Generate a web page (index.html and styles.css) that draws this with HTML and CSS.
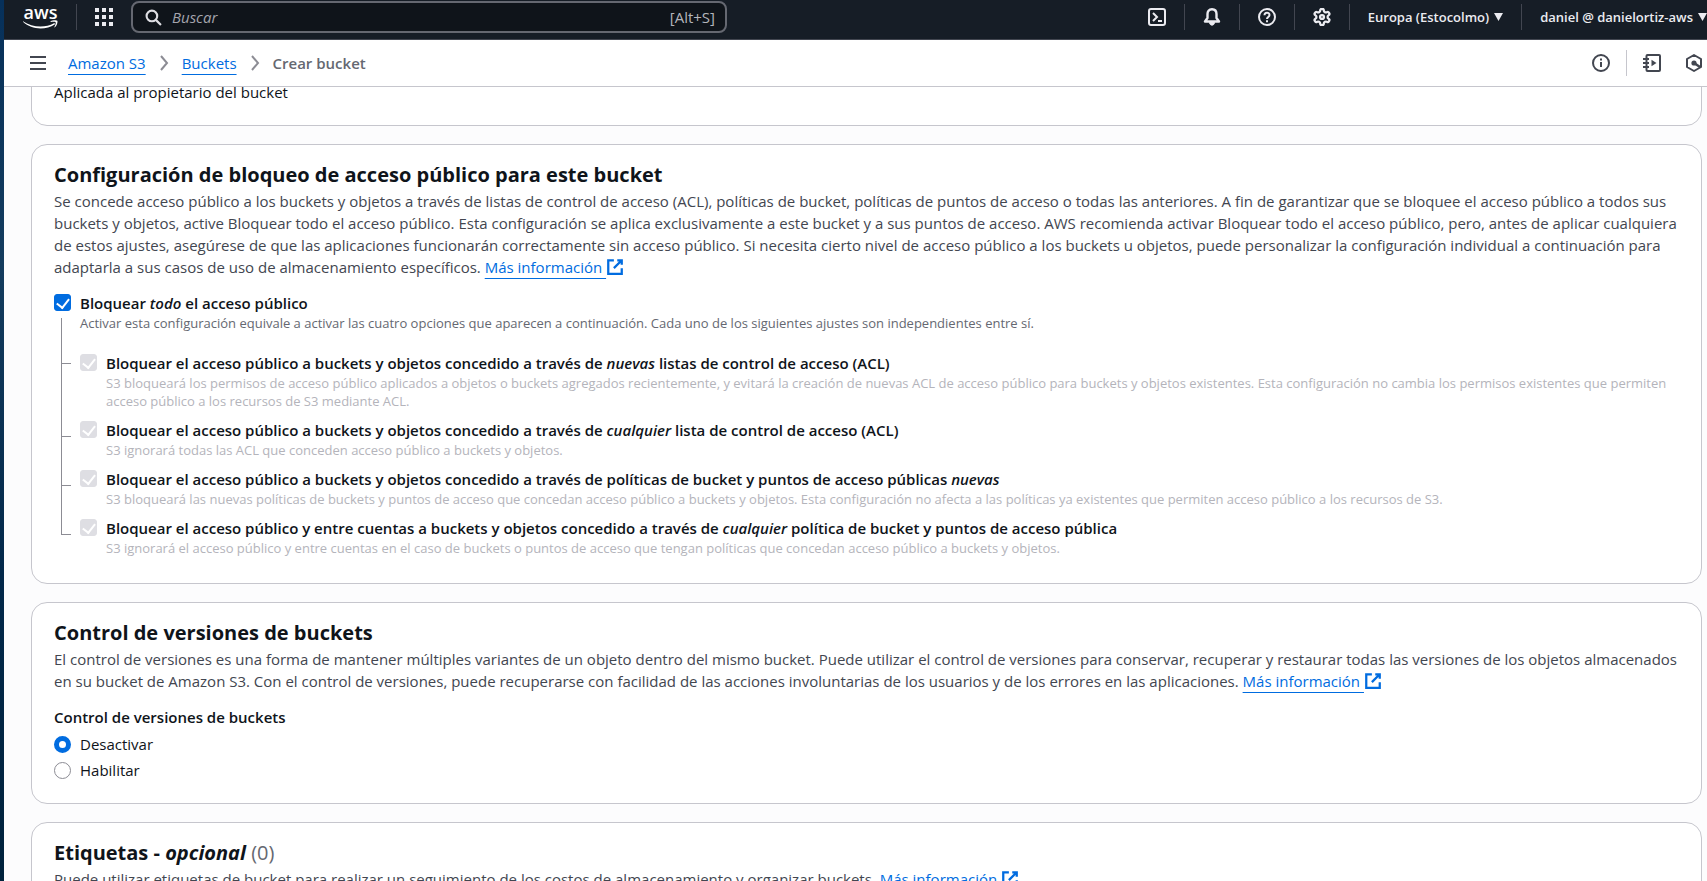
FILE: index.html
```
<!DOCTYPE html>
<html lang="es">
<head>
<meta charset="utf-8">
<title>Crear bucket | S3</title>
<link rel="stylesheet" href="styles.css">
</head>
<body>
<svg width="0" height="0" class="defs" aria-hidden="true">
  <symbol id="external" viewBox="0 0 16 16"><path d="M10 2h4v4M7 9l7-7M14 9v5H2V2h5" fill="none" stroke="currentColor" stroke-width="2"/></symbol>
  <symbol id="chevron" viewBox="0 0 16 16"><path d="M5 1l6 7-6 7" fill="none" stroke="currentColor" stroke-width="2"/></symbol>
</svg>
<header class="topnav">
  <a class="logo" href="#" aria-label="aws"><span class="logo-word">aws</span><svg class="logo-smile" viewBox="0 0 35 9"><path d="M0 1.2C9 7.5 22 8.2 31 3.3c.8-.4 1.5.5.7 1.1C22.500 10.500 8 9.500.2 2 -.2 1.600-.2 1.100 0 1.200z"/><path d="M27.500 1.400c2.500-1.500 6.200-1.200 6.800-.6.6.7-.1 4.600-2.400 6.500-.4.300-.7.100-.5-.3.600-1.300 1.700-4.100 1.200-4.800-.6-.700-3.400-.4-4.700-.2-.5 0-.7-.3-.4-.6z"/></svg></a>
  <span class="rule"></span>
  <button class="icon-btn" aria-label="Servicios"><svg viewBox="0 0 18 18"><path d="M0 0h4v4H0zM7 0h4v4H7zM14 0h4v4h-4zM0 7h4v4H0zM7 7h4v4H7zM14 7h4v4h-4zM0 14h4v4H0zM7 14h4v4H7zM14 14h4v4h-4z" fill="currentColor"/></svg></button>
  <label class="search">
    <svg viewBox="0 0 16 16"><circle cx="6.500" cy="6.500" r="5" fill="none" stroke="currentColor" stroke-width="2"/><path d="M10 10l5 5" stroke="currentColor" stroke-width="2"/></svg>
    <input type="text" placeholder="Buscar" aria-label="Buscar">
    <span class="hint">[Alt+S]</span>
  </label>
  <div class="tools">
    <button class="icon-btn" aria-label="CloudShell"><svg viewBox="0 0 18 18" fill="none" stroke="currentColor" stroke-width="2"><rect x="1" y="1" width="16" height="16" rx="2"/><path d="M5 5l4 4-4 4M10 13h4"/></svg></button>
    <span class="rule"></span>
    <button class="icon-btn" aria-label="Notificaciones"><svg viewBox="0 0 18 18" fill="none" stroke="currentColor" stroke-width="2.400" stroke-linejoin="round"><path d="M9 1.200C5.800 1.200 4.500 3.500 4.500 6v4L2 13.500h14L13.500 10V6C13.500 3.500 12.200 1.200 9 1.200z"/><path d="M6.500 14.500c0 3.500 5 3.500 5 0z" fill="currentColor" stroke-width="1"/></svg></button>
    <span class="rule"></span>
    <button class="icon-btn" aria-label="Ayuda"><svg viewBox="0 0 18 18" fill="none" stroke="currentColor" stroke-width="2"><circle cx="9" cy="9" r="8"/><path d="M6.500 7.200C6.500 4 11.500 4 11.500 7c0 2-2.500 2-2.500 4M9 12.200v2"/></svg></button>
    <span class="rule"></span>
    <button class="icon-btn" aria-label="Configuración"><svg viewBox="1 1 22 22" fill="none" stroke="currentColor" stroke-width="2.800"><circle cx="12" cy="12" r="2.400"/><path d="M12.220 2h-.44a2 2 0 0 0-2 2v.18a2 2 0 0 1-1 1.730l-.43.25a2 2 0 0 1-2 0l-.15-.08a2 2 0 0 0-2.730.73l-.22.38a2 2 0 0 0 .73 2.730l.15.1a2 2 0 0 1 1 1.720v.51a2 2 0 0 1-1 1.740l-.15.09a2 2 0 0 0-.73 2.730l.22.38a2 2 0 0 0 2.730.73l.15-.08a2 2 0 0 1 2 0l.43.25a2 2 0 0 1 1 1.730V20a2 2 0 0 0 2 2h.44a2 2 0 0 0 2-2v-.18a2 2 0 0 1 1-1.730l.43-.25a2 2 0 0 1 2 0l.15.08a2 2 0 0 0 2.730-.73l.22-.39a2 2 0 0 0-.73-2.730l-.15-.08a2 2 0 0 1-1-1.740v-.5a2 2 0 0 1 1-1.740l.15-.09a2 2 0 0 0 .73-2.730l-.22-.38a2 2 0 0 0-2.730-.73l-.15.08a2 2 0 0 1-2 0l-.43-.25a2 2 0 0 1-1-1.730V4a2 2 0 0 0-2-2z"/></svg></button>
    <span class="rule"></span>
    <button class="menu-btn">Europa (Estocolmo)<svg viewBox="0 0 9 8"><path d="M0 0h9L4.500 8z" fill="currentColor"/></svg></button>
    <span class="rule"></span>
    <button class="menu-btn">daniel @ danielortiz-aws<svg viewBox="0 0 9 8"><path d="M0 0h9L4.500 8z" fill="currentColor"/></svg></button>
  </div>
</header>
<div class="toolbar">
  <button class="icon-btn" aria-label="Menú"><svg viewBox="0 0 18 18"><path d="M1 3h16M1 9h16M1 15h16" stroke="currentColor" stroke-width="2"/></svg></button>
  <nav class="crumbs">
    <a class="link" href="#">Amazon S3</a>
    <svg class="chev"><use href="#chevron"/></svg>
    <a class="link" href="#">Buckets</a>
    <svg class="chev"><use href="#chevron"/></svg>
    <span class="current">Crear bucket</span>
  </nav>
  <button class="icon-btn" aria-label="Información"><svg viewBox="0 0 18 18" fill="none" stroke="currentColor" stroke-width="2"><circle cx="9" cy="9" r="8"/><path d="M9 8v5M9 4.500v2"/></svg></button>
  <span class="rule"></span>
  <button class="icon-btn" aria-label="Tutoriales"><svg viewBox="0 0 18 18" fill="none" stroke="currentColor" stroke-width="2"><rect x="3.500" y="1" width="13.500" height="16" rx="1"/><path d="M0 5h6M0 9h6M0 13h6"/><path d="M8.500 5.800v6.400l5-3.200z" fill="currentColor" stroke="none"/></svg></button>
  <button class="icon-btn last" aria-label="Amazon Q"><svg viewBox="0 0 18 18" fill="none" stroke="currentColor" stroke-width="2"><path d="M9 1l7 4v8l-7 4-7-4V5z" stroke-linejoin="round"/><circle cx="9" cy="9" r="2.600" fill="currentColor" stroke="none"/><path d="M9 9l6 4" stroke-width="2.400"/></svg></button>
</div>
<main class="content">
  <section class="card clipped"><p class="value">Aplicada al propietario del bucket</p></section>

  <section class="card">
    <h2>Configuración de bloqueo de acceso público para este bucket</h2>
    <p class="lead">Se concede acceso público a los buckets y objetos a través de listas de control de acceso (ACL), políticas de bucket, políticas de puntos de acceso o todas las anteriores. A fin de garantizar que se bloquee el acceso público a todos sus buckets y objetos, active Bloquear todo el acceso público. Esta configuración se aplica exclusivamente a este bucket y a sus puntos de acceso. AWS recomienda activar Bloquear todo el acceso público, pero, antes de aplicar cualquiera de estos ajustes, asegúrese de que las aplicaciones funcionarán correctamente sin acceso público. Si necesita cierto nivel de acceso público a los buckets u objetos, puede personalizar la configuración individual a continuación para adaptarla a sus casos de uso de almacenamiento específicos. <a class="more" href="#"><span class="link">Más información&nbsp;</span><svg><use href="#external"/></svg></a></p>
    <div class="option">
      <input type="checkbox" id="all" checked>
      <div><label for="all">Bloquear <em>todo</em> el acceso público</label>
      <p class="desc">Activar esta configuración equivale a activar las cuatro opciones que aparecen a continuación. Cada uno de los siguientes ajustes son independientes entre sí.</p></div>
    </div>
    <ul class="tree">
      <li class="option"><input type="checkbox" id="c1" checked disabled>
        <div><label for="c1">Bloquear el acceso público a buckets y objetos concedido a través de <em>nuevas</em> listas de control de acceso (ACL)</label>
        <p class="desc">S3 bloqueará los permisos de acceso público aplicados a objetos o buckets agregados recientemente, y evitará la creación de nuevas ACL de acceso público para buckets y objetos existentes. Esta configuración no cambia los permisos existentes que permiten acceso público a los recursos de S3 mediante ACL.</p></div></li>
      <li class="option"><input type="checkbox" id="c2" checked disabled>
        <div><label for="c2">Bloquear el acceso público a buckets y objetos concedido a través de <em>cualquier</em> lista de control de acceso (ACL)</label>
        <p class="desc">S3 ignorará todas las ACL que conceden acceso público a buckets y objetos.</p></div></li>
      <li class="option"><input type="checkbox" id="c3" checked disabled>
        <div><label for="c3">Bloquear el acceso público a buckets y objetos concedido a través de políticas de bucket y puntos de acceso públicas <em>nuevas</em></label>
        <p class="desc">S3 bloqueará las nuevas políticas de buckets y puntos de acceso que concedan acceso público a buckets y objetos. Esta configuración no afecta a las políticas ya existentes que permiten acceso público a los recursos de S3.</p></div></li>
      <li class="option"><input type="checkbox" id="c4" checked disabled>
        <div><label for="c4">Bloquear el acceso público y entre cuentas a buckets y objetos concedido a través de <em>cualquier</em> política de bucket y puntos de acceso pública</label>
        <p class="desc">S3 ignorará el acceso público y entre cuentas en el caso de buckets o puntos de acceso que tengan políticas que concedan acceso público a buckets y objetos.</p></div></li>
    </ul>
  </section>

  <section class="card">
    <h2>Control de versiones de buckets</h2>
    <p class="lead">El control de versiones es una forma de mantener múltiples variantes de un objeto dentro del mismo bucket. Puede utilizar el control de versiones para conservar, recuperar y restaurar todas las versiones de los objetos almacenados en su bucket de Amazon S3. Con el control de versiones, puede recuperarse con facilidad de las acciones involuntarias de los usuarios y de los errores en las aplicaciones. <a class="more" href="#"><span class="link">Más información&nbsp;</span><svg><use href="#external"/></svg></a></p>
    <fieldset class="radios">
      <legend>Control de versiones de buckets</legend>
      <label><input type="radio" name="versions" checked>Desactivar</label>
      <label><input type="radio" name="versions">Habilitar</label>
    </fieldset>
  </section>

  <section class="card">
    <h2>Etiquetas - <em>opcional</em> <span class="count">(0)</span></h2>
    <p class="lead">Puede utilizar etiquetas de bucket para realizar un seguimiento de los costos de almacenamiento y organizar buckets. <a class="more" href="#"><span class="link">Más información&nbsp;</span><svg><use href="#external"/></svg></a></p>
  </section>
</main>
</body>
</html>
```
FILE: styles.css
```
* { box-sizing: border-box; margin: 0; padding: 0; }
body {
  height: 100vh;
  padding-left: 4px;
  display: flex;
  flex-direction: column;
  overflow: hidden;
  font: 15px/22px "Open Sans", "Noto Sans", sans-serif;
  color: #0f141a;
  background: linear-gradient(#06305a, #143c5e 30%, #02284a 65%, #00223c);
}
button { font: inherit; color: inherit; background: none; border: 0; cursor: pointer; }
svg { display: block; }
.defs { position: absolute; }
.icon-btn { flex: none; width: 18px; height: 18px; }
.icon-btn svg { width: 100%; height: 100%; }
.rule { flex: none; width: 1px; height: 26px; background: #424650; }

/* Top navigation */
.topnav {
  flex: none;
  display: flex;
  align-items: center;
  gap: 18px;
  padding: 1px 0 6px 19px;
  color: #ebebf0;
  background: #161d26;
  border-bottom: 1px solid #424650;
}
.logo { flex: none; width: 35px; color: #fff; text-decoration: none; }
.logo-word { display: block; text-align: center; font-size: 18px; line-height: 12px; font-weight: 600; }
.logo-smile { width: 35px; height: 9px; margin-top: 2px; fill: #fff; }
.search {
  flex: 0 1 596px;
  display: flex;
  align-items: center;
  gap: 10px;
  height: 32px;
  padding: 0 10px 0 12px;
  color: #b4b4bb;
  background: #0f141a;
  border: 2px solid #656871;
  border-radius: 8px;
}
.search svg { flex: none; width: 17px; height: 17px; color: #dedee3; }
.search input { flex: 1; min-width: 0; font: inherit; color: #fff; background: none; border: 0; outline: 0; }
.search input::placeholder { font-style: italic; color: #a4a4ad; opacity: 1; }
.tools { flex: none; display: flex; align-items: center; gap: 18px; margin-left: auto; }
.menu-btn { display: flex; align-items: center; gap: 5px; font-size: 13px; line-height: 20px; font-weight: 600; white-space: nowrap; }
.menu-btn svg { width: 9px; height: 8px; }

/* Breadcrumb bar */
.toolbar {
  flex: none;
  display: flex;
  align-items: center;
  gap: 16px;
  height: 47px;
  padding: 0 4px 0 25px;
  color: #424650;
  background: #fff;
  border-bottom: 1px solid #c6c6cd;
}
.toolbar .rule { background: #c6c6cd; }
.toolbar .last { margin-left: 8px; }
.crumbs { flex: 1; display: flex; align-items: center; gap: 10px; padding-left: 5px; }
.chev { width: 16px; height: 16px; color: #8c8c94; }
.current { font-weight: 600; color: #656871; }
.link { color: #006ce0; text-decoration: underline 1px; text-underline-offset: 5px; }

/* Cards */
.content {
  flex: 1;
  min-height: 0;
  overflow: hidden;
  padding: 0 5px 0 27px;
  background: #fcfcfd;
}
.card {
  margin-bottom: 18px;
  padding: 17px 21px 22px 22px;
  background: #fff;
  border: 1px solid #c6c6cd;
  border-radius: 16px;
}
.clipped { margin-top: -24px; }
h2 { margin-bottom: 2px; font-size: 20px; line-height: 26px; font-weight: 700; }
.count { font-weight: 400; color: #656871; }
.lead { color: #424650; margin-bottom: 14px; }
.more { white-space: nowrap; color: #006ce0; text-decoration: none; }
.more svg { display: inline-block; width: 18px; height: 18px; vertical-align: -3px; }

/* Options */
.option { position: relative; display: flex; gap: 8px; }
.option input { flex: none; margin-top: 2px; }
.option label { display: block; font-weight: 600; }
.desc { font-size: 13px; line-height: 18px; color: #656871; }
.tree {
  position: relative;
  display: grid;
  gap: 9px;
  margin-top: 20px;
  padding: 0 0 4px 26px;
  list-style: none;
}
.tree .desc { color: #b4b4bb; }
.tree::before {
  content: "";
  position: absolute;
  left: 7px;
  top: -34px;
  bottom: 26px;
  border-left: 1px solid #8c8c94;
}
.tree .option::before {
  content: "";
  position: absolute;
  left: -19px;
  top: 17px;
  width: 10px;
  border-top: 1px solid #8c8c94;
}
.tree .option:first-child::before { top: 11px; }
input[type="checkbox"], input[type="radio"] {
  appearance: none;
  display: grid;
  place-items: center;
  width: 17px;
  height: 17px;
  background: #fff;
  border: 1px solid #8c8c94;
}
input[type="checkbox"] { border-radius: 3px; }
.option input, .radios input { margin-right: 1px; }
input[type="checkbox"]:checked { background: #006ce0; border-color: #006ce0; }
input[type="checkbox"]:checked::after {
  content: "";
  width: 6px;
  height: 10px;
  margin-bottom: 2px;
  border: solid #fff;
  border-width: 0 2px 2px 0;
  rotate: 38deg;
}
input[type="checkbox"]:disabled { background: #dedee3; border-color: #dedee3; }
input[type="radio"] { border-radius: 50%; }
input[type="radio"]:checked { border: 5px solid #006ce0; }
.radios { display: grid; gap: 4px; border: 0; }
.radios legend { margin-bottom: 5px; font-weight: 600; }
.radios label { display: flex; align-items: center; gap: 8px; }
```
